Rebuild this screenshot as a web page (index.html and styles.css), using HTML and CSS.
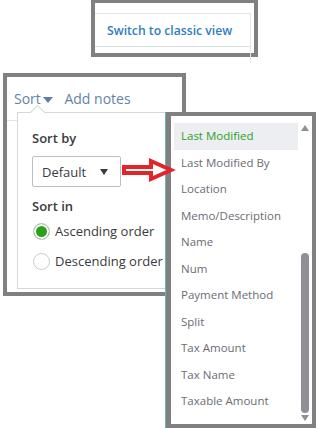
FILE: index.html
```html
<!DOCTYPE html>
<html lang="en">
<head>
  <meta charset="UTF-8" />
  <title>Sort options</title>
  <link rel="stylesheet" href="styles.css">
</head>
<body>
  <div class="canvas">

    <div class="shot shot-top">
      <div class="top-inner">
        <div class="classic-row">Switch to classic view</div>
      </div>
    </div>

    <div class="shot shot-sort">
      <div class="sort-header">
        <span class="sort-link">Sort <span class="caret-down"></span></span>
        <span class="sort-link">Add notes</span>
      </div>

      <div class="popover">
        <div class="popover-tip"></div>
        <div class="field-label">Sort by</div>
        <div class="select">
          <span>Default</span>
          <span class="select-arrow"></span>
        </div>
        <div class="field-label">Sort in</div>
        <label class="radio-row">
          <span class="radio checked"></span>
          <span>Ascending order</span>
        </label>
        <label class="radio-row">
          <span class="radio"></span>
          <span>Descending order</span>
        </label>
      </div>
    </div>

    <div class="shot shot-list">
      <div class="list-inner">
        <ul class="options">
          <li class="selected">Last Modified</li>
          <li>Last Modified By</li>
          <li>Location</li>
          <li>Memo/Description</li>
          <li>Name</li>
          <li>Num</li>
          <li>Payment Method</li>
          <li>Split</li>
          <li>Tax Amount</li>
          <li>Tax Name</li>
          <li>Taxable Amount</li>
          <li>Transaction Type</li>
        </ul>
        <div class="scrollbar">
          <span class="scroll-up"></span>
          <span class="scroll-track"><span class="scroll-thumb"></span></span>
          <span class="scroll-down"></span>
        </div>
      </div>
    </div>

    <!-- red arrow pointing from the select to the list -->
    <svg class="red-arrow" width="60" height="32" viewBox="0 0 60 32">
      <path d="M7 12 L34 12 L34 6 L54 15 L34 24 L34 18 L7 18 Z"
            fill="#fff" stroke="#e4232a" stroke-width="4" stroke-linejoin="miter" />
    </svg>

  </div>
</body>
</html>
```

FILE: styles.css
```css
body {
  margin: 0;
  background: #fff;
  font-family: "Open Sans", Lato, Arial, sans-serif;
}

.canvas {
  position: relative;
  width: 318px;
  height: 429px;
  overflow: hidden;
}

/* each cut-out screenshot sits on the canvas with a grey frame */
.shot {
  position: absolute;
  box-sizing: border-box;
  border: 4px solid #808080;
  background: #fff;
}

/* top cut-out */
.shot-top {
  left: 91px;
  top: 0;
  width: 167px;
  height: 57px;
  border-top-width: 3px;
}

.top-inner {
  height: 100%;
  margin-right: 3px;
  border-right: 1px solid #e1e4e8;
}

.classic-row {
  margin-top: 10px;
  height: 32px;
  display: flex;
  align-items: center;
  padding-left: 12px;
  border-top: 1px solid #e1e4e8;
  border-bottom: 1px solid #d5e3e6;
  color: #2f7dc1;
  font-weight: 600;
  font-size: 12.2px;
}

/* sort cut-out */
.shot-sort {
  left: 3px;
  top: 73px;
  width: 183px;
  height: 223px;
}

.sort-header {
  display: flex;
  align-items: center;
  gap: 11px;
  height: 44px;
  padding-left: 7px;
  border-bottom: 1px solid #dde6ee;
  box-sizing: border-box;
}

.sort-link {
  color: #6383a8;
  font-size: 14px;
}

.caret-down {
  display: inline-block;
  width: 0;
  height: 0;
  margin-left: -1px;
  border-left: 5px solid transparent;
  border-right: 5px solid transparent;
  border-top: 6px solid #5d7fa5;
  vertical-align: middle;
}

.popover {
  position: absolute;
  left: 10px;
  top: 35px;
  width: 150px;
  height: 177px;
  box-sizing: border-box;
  background: #fff;
  border: 1px solid #d4d7dc;
  padding: 15px 0 0 14px;
  font-size: 13px;
  color: #393a3d;
}

.popover-tip {
  position: absolute;
  left: 14px;
  top: -6px;
  width: 10px;
  height: 10px;
  background: #fff;
  border-left: 1px solid #d4d7dc;
  border-top: 1px solid #d4d7dc;
  transform: rotate(45deg);
}

.field-label {
  font-weight: 600;
  height: 20px;
  line-height: 20px;
}

.select {
  margin: 8px 0 9px;
  width: 89px;
  height: 31px;
  box-sizing: border-box;
  border: 1px solid #babec5;
  border-radius: 2px;
  display: flex;
  align-items: center;
  justify-content: space-between;
  padding: 0 12px 0 9px;
}

.select-arrow {
  width: 0;
  height: 0;
  border-left: 4px solid transparent;
  border-right: 4px solid transparent;
  border-top: 6px solid #393a3d;
}

.radio-row {
  display: flex;
  align-items: center;
  gap: 5px;
  height: 30px;
  margin-left: 1px;
  white-space: nowrap;
}

.radio {
  flex: none;
  width: 17px;
  height: 17px;
  box-sizing: border-box;
  border-radius: 50%;
  border: 1px solid #c9cbcf;
  background: #fff;
}

.radio.checked {
  background: #2ca01c;
  box-shadow: inset 0 0 0 2px #fff;
}

/* list cut-out */
.shot-list {
  left: 166px;
  top: 112px;
  width: 150px;
  height: 316px;
  border-left-width: 5px;
  box-shadow: -1px 0 0 #6ab6b5;
}

.list-inner {
  display: flex;
  height: 100%;
  overflow: hidden;
}

.options {
  list-style: none;
  margin: 0;
  padding: 7px 0 0 3px;
  width: 124px;
  font-size: 11.5px;
  color: #6b6c72;
}

.options li {
  height: 26.5px;
  line-height: 26.5px;
  padding-left: 7px;
  white-space: nowrap;
}

.options li.selected {
  background: #eceef1;
  color: #2ca01c;
}

.scrollbar {
  width: 8px;
  margin-left: 3px;
  display: flex;
  flex-direction: column;
  align-items: center;
  padding: 9px 0 3px;
}

.scroll-up,
.scroll-down {
  width: 0;
  height: 0;
  border-left: 4px solid transparent;
  border-right: 4px solid transparent;
}

.scroll-up {
  border-bottom: 6px solid #8e9095;
}

.scroll-down {
  border-top: 6px solid #8e9095;
}

.scroll-track {
  flex: 1;
  width: 8px;
  display: flex;
  flex-direction: column;
  justify-content: flex-end;
  padding: 4px 0 2px;
}

.scroll-thumb {
  height: 160px;
  background: #8e9095;
  border-radius: 4px;
}

.red-arrow {
  position: absolute;
  left: 117px;
  top: 155px;
}
```
